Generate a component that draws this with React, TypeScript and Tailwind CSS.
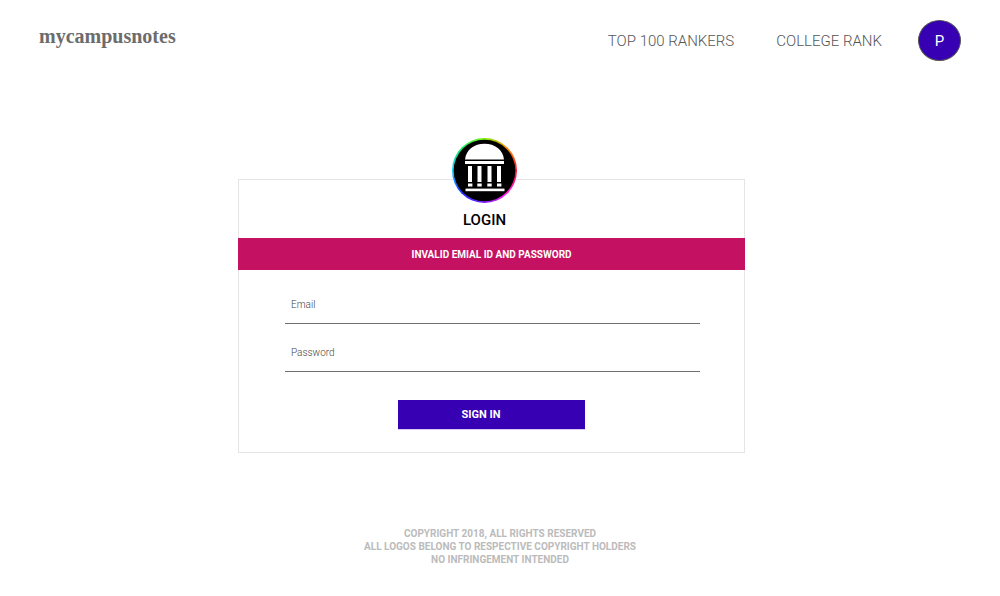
import React from "react";

function CampusIcon() {
  return (
    <svg viewBox="0 0 65 65" className="h-full w-full" aria-hidden="true">
      <circle cx="32.5" cy="32.5" r="30.8" fill="#000" />
      <g fill="#fff">
        <path d="M13 21.500C14 12 22 5.800 32.500 5.800S51 12 52 21.500Z" />
        <rect x="13" y="23" width="39" height="3" />
        <path d="M16 28h4v16h-4zM25.500 28h4v16h-4zM35.500 28h4v16h-4zM45 28h4v16h-4z" />
        <path d="M16 45.500h4.400v3h-4.400zM25.300 45.500h4.400v3h-4.400zM35.300 45.500h4.400v3h-4.400zM45 45.500h4.400v3h-4.400z" />
        <rect x="13.500" y="50.600" width="39" height="2.600" />
      </g>
    </svg>
  );
}

function Field({ label, type }: { label: string; type: string }) {
  return (
    <label className="block">
      <input
        type={type}
        aria-label={label}
        placeholder={label}
        className="block h-9 w-full border-b border-[#6f6f73] bg-transparent px-[6px] pb-[2px] text-[10px] font-light text-[#444] outline-none placeholder:text-[#444] placeholder:opacity-100"
      />
    </label>
  );
}

export default function App() {
  return (
    <div className="min-h-screen bg-white font-['Roboto',sans-serif]">
      <header className="flex items-start justify-between px-[39px] pt-5">
        <a href="#home" className="pt-1 font-['Liberation_Serif',serif] text-xl leading-6 font-bold text-[#6c6c6c]">
          mycampusnotes
        </a>
        <nav className="flex items-center text-[15px] font-light text-[#555]">
          <a href="#rankers" className="mr-[42px] pt-[2px]">TOP 100 RANKERS</a>
          <a href="#college" className="mr-9 pt-[2px]">COLLEGE RANK</a>
          <button type="button" aria-label="Profile" className="h-[41px] w-[43px] rounded-[50%] border border-[#555] bg-[#3700b3] pt-[2px] font-normal text-white">
            P
          </button>
        </nav>
      </header>

      <main className="mt-[77px] pr-[17px]">
        <form className="mx-auto w-full max-w-[507px]" onSubmit={(e) => e.preventDefault()}>
          <div className="mt-[118px] border border-[#e5e5e5] pb-[22px]">
            <div className="-mt-[42px] flex flex-col items-center pr-[14px]">
              <div className="h-[65px] w-[65px] rounded-full bg-[conic-gradient(#80f010,#ff8a00,#ff1030,#ff20e0,#8020ff,#2030ff,#10d0ff,#10f060,#80f010)]">
                <CampusIcon />
              </div>
              <h1 className="mt-[7px] text-[15px] leading-5 font-medium text-black">LOGIN</h1>
            </div>
            <p role="alert" className="-mx-px mt-2 bg-[#c51162] pt-px text-center text-[10px] leading-[31px] font-bold text-white">
              INVALID EMIAL ID AND PASSWORD
            </p>
            <div className="mr-[44px] ml-[46px] mt-[18px] flex flex-col gap-3">
              <Field label="Email" type="email" />
              <Field label="Password" type="password" />
            </div>
            <button type="submit" className="mx-auto mt-7 block h-[30px] w-[187px] border-b border-[#d9c8f3] bg-[#3700b3] pt-px pr-[21px] text-[11px] font-bold text-white">
              SIGN IN
            </button>
          </div>
        </form>
      </main>

      <footer className="mt-[74px] text-center text-[10px] leading-[13px] font-bold text-[#bbb]">
        <p>COPYRIGHT 2018, ALL RIGHTS RESERVED</p>
        <p>ALL LOGOS BELONG TO RESPECTIVE COPYRIGHT HOLDERS</p>
        <p>NO INFRINGEMENT INTENDED</p>
      </footer>
    </div>
  );
}
